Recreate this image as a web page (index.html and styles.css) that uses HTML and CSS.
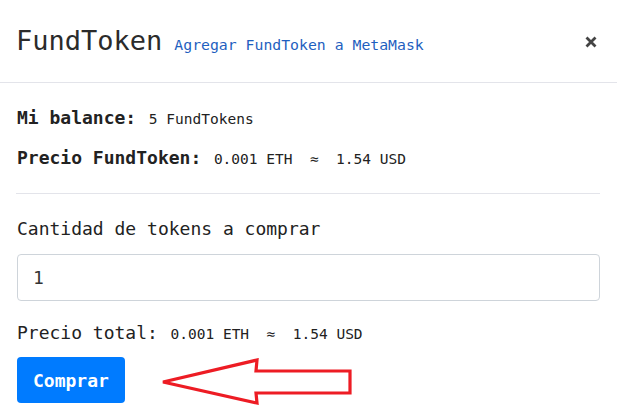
FILE: index.html
```html
<!DOCTYPE html>
<html lang="es">
<head>
<meta charset="utf-8">
<title>FundToken</title>
<link rel="stylesheet" href="styles.css">
</head>
<body>
<div class="modal">
  <div class="modal-header">
    <h5 class="modal-title">FundToken</h5>
    <a class="add-link" href="#">Agregar FundToken a MetaMask</a>
    <span class="close" aria-label="Cerrar">
      <svg width="12" height="12" viewBox="0 0 12 12"><path d="M1.5 1.5 L10.5 10.5 M10.5 1.5 L1.5 10.5" stroke="#444" stroke-width="2.8" stroke-linecap="butt"/></svg>
    </span>
  </div>
  <div class="modal-body">
    <div class="info-row row-balance"><b class="label">Mi balance:</b> <span class="value">5 FundTokens</span></div>
    <div class="info-row row-price"><b class="label">Precio FundToken:</b> <span class="value">0.001 ETH &nbsp;≈&nbsp; 1.54 USD</span></div>
    <hr class="divider">
    <label class="field-label" for="qty">Cantidad de tokens a comprar</label>
    <input id="qty" class="field-input" type="text" value="1">
    <div class="info-row row-total"><span class="label-plain">Precio total:</span> <span class="value">0.001 ETH &nbsp;≈&nbsp; 1.54 USD</span></div>
    <div class="action-row">
      <button class="btn-buy" type="button">Comprar</button>
      <svg class="arrow" width="194" height="48" viewBox="0 0 194 48">
        <polygon points="2,24 96,2 95,13 189,13 189,35 95,35 96,45" fill="none" stroke="#ed1c24" stroke-width="3.2" stroke-linejoin="miter"/>
      </svg>
    </div>
  </div>
</div>
</body>
</html>
```

FILE: styles.css
```css
* { box-sizing: border-box; }
body {
  margin: 0;
  background: #fff;
  font-family: "DejaVu Sans Mono", "Liberation Mono", monospace;
  color: #212529;
}
.modal { width: 617px; }
.modal-header {
  height: 83px;
  display: flex;
  align-items: baseline;
  padding: 26px 20px 0 16px;
  border-bottom: 1px solid #e3e4ea;
}
.modal-title {
  margin: 0;
  font-size: 27px;
  font-weight: normal;
  line-height: 30px;
  color: #2b2b2b;
}
.add-link {
  margin-left: 12px;
  font-size: 14.8px;
  color: #1f5fc0;
  text-decoration: none;
}
.close {
  margin-left: auto;
  align-self: flex-start;
  padding-top: 10px;
  display: flex;
}
.modal-body {
  padding: 22px 17px 0 17px;
  display: flex;
  flex-direction: column;
}
.info-row {
  line-height: 26px;
  height: 26px;
  white-space: pre;
}
.label { font-size: 18px; font-weight: bold; color: #222; }
.label-plain { font-size: 18px; color: #222; }
.value { font-size: 14.5px; color: #222; margin-left: 3px; }
.row-price { margin-top: 14px; }
.divider {
  margin: 22px 0 0 -1px;
  width: 584px;
  border: 0;
  border-top: 1px solid #e3e4ea;
}
.field-label {
  margin-top: 22px;
  font-size: 18px;
  line-height: 26px;
  color: #222;
}
.field-input {
  margin-top: 12px;
  width: 583px;
  height: 47px;
  border: 1px solid #ced4da;
  border-radius: 4px;
  padding: 0 15px;
  font-family: inherit;
  font-size: 18px;
  color: #333;
}
.row-total { margin-top: 19px; }
.action-row {
  margin-top: 11px;
  display: flex;
  align-items: flex-start;
  gap: 36px;
}
.btn-buy {
  height: 46px;
  padding: 0 16px;
  border: 0;
  border-radius: 4px;
  background: #007bff;
  color: #fff;
  font-family: inherit;
  font-size: 18px;
  font-weight: bold;
}
.arrow { margin-top: 1px; }
```
